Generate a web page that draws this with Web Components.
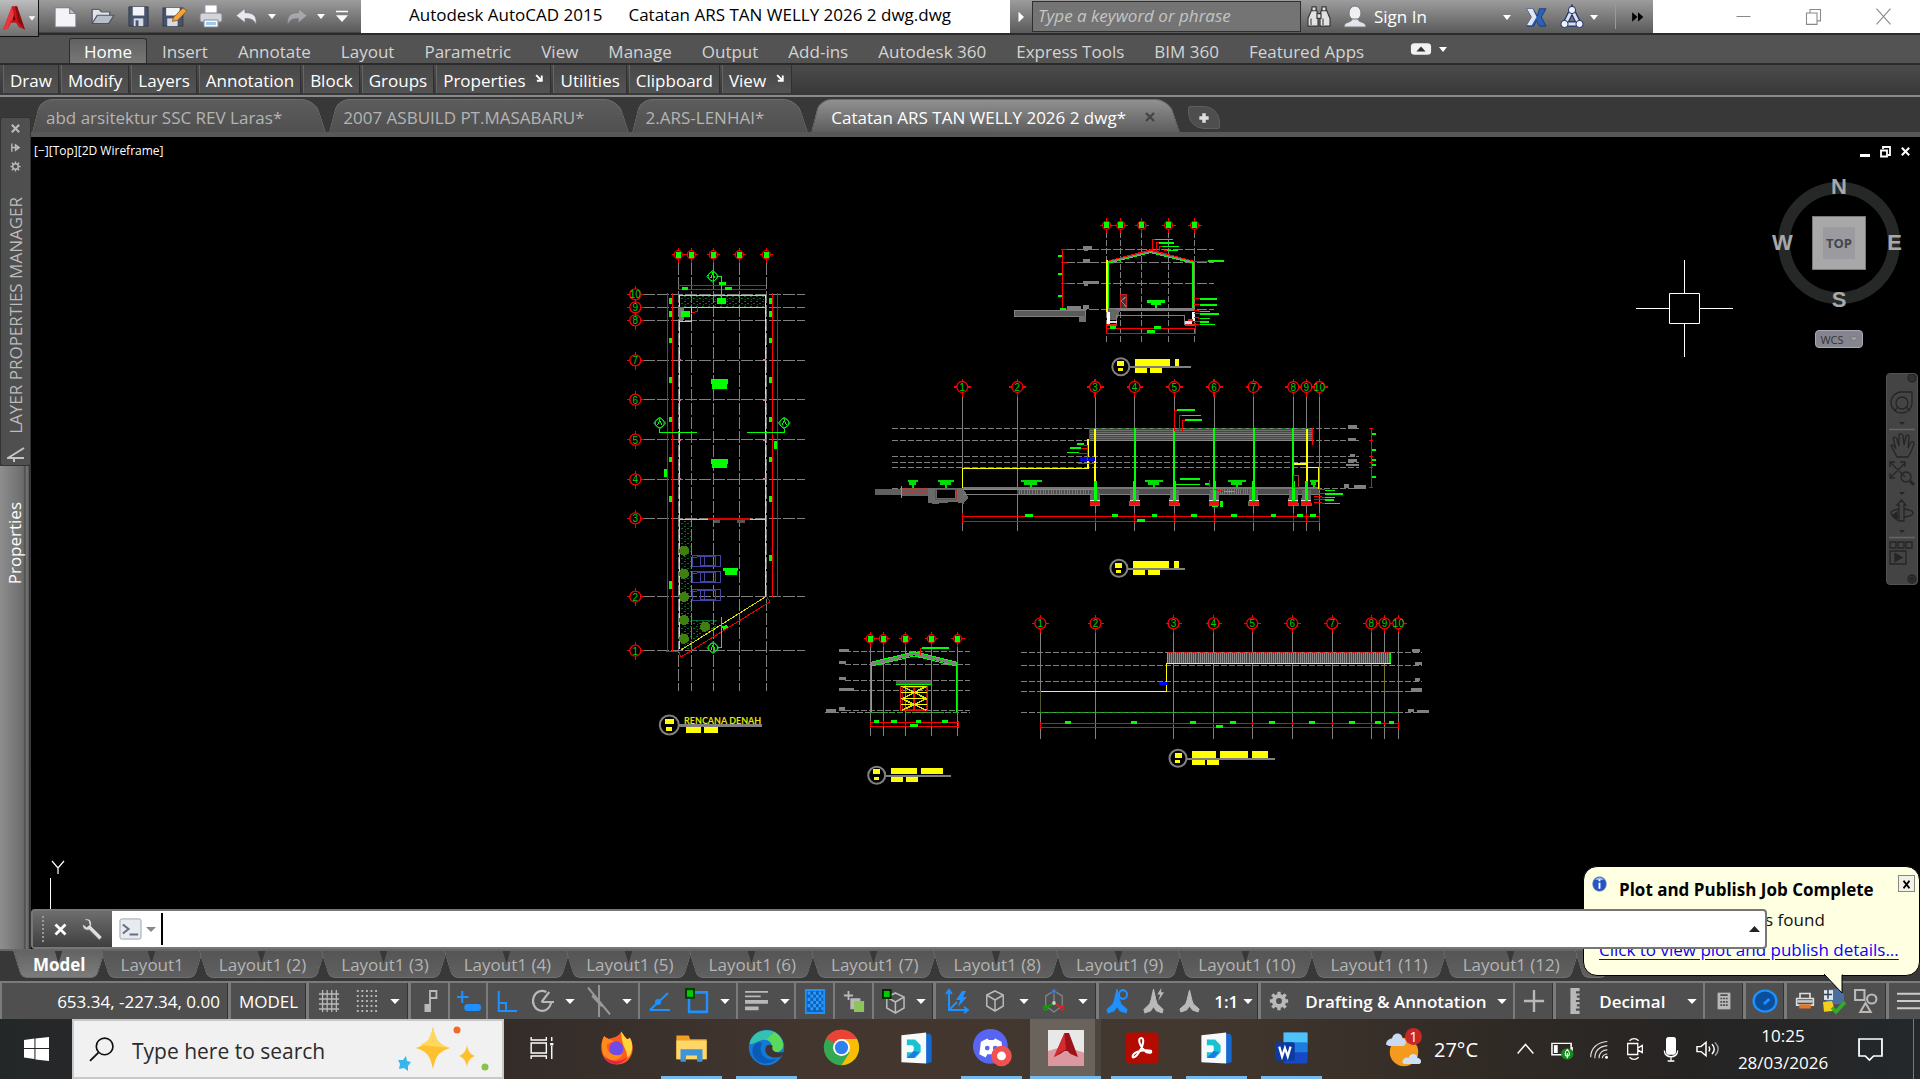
<!DOCTYPE html>
<html lang="en">
<head>
<meta charset="utf-8">
<title>Autodesk AutoCAD 2015</title>
<style>
html,body{margin:0;height:100%;background:#000}
body{font-family:"Open Sans","Noto Sans",sans-serif;font-size:17px;color:#fff;overflow:hidden}
</style>
</head>
<body>
<cad-desktop></cad-desktop>
<script>
const BASE = `*{box-sizing:border-box}
button,input,select{font:inherit;color:inherit;background:none;border:0;padding:0;margin:0;outline:0;border-radius:0}
select{appearance:none}`;

const define = (name, css, html) => customElements.define(name, class extends HTMLElement {
  constructor() {
    super();
    const body = typeof html === 'function' ? html(this) : html;
    this.attachShadow({ mode: 'open' }).innerHTML = `<style>${BASE}${css}</style>${body}`;
  }
});

/* ---------- icons ---------- */
const B = '#1e90ff', G = '#b9b9b9';
const annot = c => `<path d="M12 1l2.500 10 1.500 4 6 5-1 3-6-2-3-4-3 4-6 2-1-3 6-5 1.500-4z" fill="${c}" stroke="${c}"/>`;
const cube = `<path d="M12 2l9 4v11l-9 5-9-5V6zM3 6l9 5 9-5M12 11v11" fill="none" stroke="${G}" stroke-width="1.600"/>`;
const ICONS = {
  logo: `<path d="M1 22L10 2h5l8 20-6-2-3-4h-5l-3 5z" fill="#c4161c"/><path d="M10 2l3 12H9l-3 7-5 1z" fill="#e8383b"/><path d="M13 2l3 13 7 7-8-20z" fill="#8a0c10"/><path d="M10.500 14l1.500-5 1.500 5z" fill="#5a0508"/>`,
  new: `<path d="M2 3h14l6 6v14H2z" fill="#f4f4f8" stroke="#77798a"/><path d="M16 3v6h6z" fill="#c0c4cf" stroke="#77798a"/>`,
  open: `<path d="M2 20V4h7l2 3h8v4" fill="#dfe3ea" stroke="#60646e" stroke-width="1.500"/><path d="M2 21l5-10h16l-5 10z" fill="#b8bec9" stroke="#50545e" stroke-width="1.200"/>`,
  save: `<path d="M2 2h20v20H2z" fill="#49536b" stroke="#333b50"/><path d="M6 2h12v9H6z" fill="#f2f4f8"/><path d="M7 14h10v8H7z" fill="#d7dbe4"/><path d="M9 16h3v6H9z" fill="#49536b"/>`,
  saveas: `<path d="M1 3h19v19H1z" fill="#49536b" stroke="#333b50"/><path d="M4 3h13v8H4z" fill="#f2f4f8"/><path d="M5 14h10v8H5z" fill="#d7dbe4"/><path d="M11 13L20 3l4 3-9 10-5 1z" fill="#f1a33a" stroke="#80520f" stroke-width=".8"/>`,
  print: `<path d="M6 1h12v9H6z" fill="#fff" stroke="#9a9da6"/><rect x="1" y="9" width="22" height="9" rx="2" fill="#d2d5dc" stroke="#7f838c"/><path d="M5 16h14v7H5z" fill="#f6fbff" stroke="#868a94"/><path d="M7 18h10v3H7z" fill="#9bc9f0"/>`,
  undo: `<path d="M10 3v5c8 0 12 3 11 14-2-5-4-7-11-7v5L1 11.500z" fill="#e7e9ef" stroke="#73767e" stroke-width=".8"/>`,
  redo: `<path d="M14 3v5C6 8 2 11 3 22c2-5 4-7 11-7v5l9-8.500z" fill="#a6a7aa" stroke="#77787b" stroke-width=".8"/>`,
  custom: `<path d="M3 5h18v2H3zM3 11h18l-9 9z" fill="#fff"/>`,
  down: `<path d="M4 8h16l-8 10z" fill="#fff"/>`,
  play: `<path d="M7 3l11 9-11 9z" fill="#fff"/>`,
  binoc: `<g fill="#e2e2e2" stroke="#3a3a3a" stroke-width="1.200"><path d="M5 4h4l2 6v12H1V14zM15 4h4l4 10v8H13V10z"/><path d="M5 2h4v4H5zM15 2h4v4h-4zM10 9h4v5h-4z"/></g><path d="M4 14v7M16 14v7" stroke="#888" stroke-width="2"/>`,
  person: `<ellipse cx="12" cy="8" rx="6" ry="7" fill="#eef0f4" stroke="#777"/><path d="M9 14h6c0 4 8 2 8 8H1c0-6 8-4 8-8z" fill="#e1e4ea" stroke="#777"/>`,
  xchg: `<path d="M2 3h6l5 8 2-8h7l-5 9 5 10h-7l-3-6-3 6H2l5-10z" fill="#2b62b8" stroke="#1c3c78"/><path d="M2 3h6l4 9-5 9H2l5-9z" fill="#dfe6f2"/>`,
  a360: `<path d="M12 5L5 19h14z" fill="none" stroke="#22346e" stroke-width="5.500"/><path d="M12 5L5 19h14z" fill="none" stroke="#d9e0f0" stroke-width="3"/><g fill="#eef2fb" stroke="#22346e"><circle cx="12" cy="5" r="3.600"/><circle cx="4.500" cy="19" r="3.600"/><circle cx="19.500" cy="19" r="3.600"/></g>`,
  ff: `<path d="M2 4l9 8-9 8zM12 4l9 8-9 8z" fill="#000"/>`,
  min: `<path d="M4 12h16" stroke="#888" stroke-width="1.200"/>`,
  rest: `<path d="M4 8h12v13H4zM8 8V4h12v13h-4" fill="none" stroke="#888" stroke-width="1.200"/>`,
  close: `<path d="M4 3l16 18M20 3L4 21" stroke="#888" stroke-width="1.200"/>`,
  ribmin: `<rect x="1" y="5" width="22" height="14" rx="4" fill="#f0f1f4"/><path d="M7 15l5-6 5 6z" fill="#333"/>`,
  launch: `<path d="M3 3l12 12M18 4v14H5" fill="none" stroke="#fff" stroke-width="5"/>`,
  x: `<path d="M4 4l16 16M20 4L4 20" stroke="currentColor" stroke-width="4.500"/>`,
  plus: `<path d="M12 4v16M4 12h16" stroke="#ddd" stroke-width="6"/>`,
  pin: `<path d="M4 3v18M4 12h14M12 6l8 6-8 6z" fill="none" stroke="#bbb" stroke-width="3"/>`,
  gear2: `<path d="M12 1v22M1 12h22M4 4l16 16M20 4L4 20" stroke="#bbb" stroke-width="3"/><circle cx="12" cy="12" r="6" fill="#4d4d4d" stroke="#bbb" stroke-width="3"/>`,
  wrench: `<path d="M2 3c4-3 10 0 8 6l12 11-3 3L8 13c-5 1-8-2-7-6l4 3 3-2-1-4z" fill="#dedede" stroke="#555" stroke-width=".8"/>`,
  prompt: `<rect x="1" y="1" width="22" height="22" rx="2" fill="#e8ebf0" stroke="#9aa0aa"/><path d="M4 7l6 5-6 5M11 18h9" fill="none" stroke="#6a7080" stroke-width="2.200"/>`,
  grid: `<path d="M5 1v22M10 1v22M15 1v22M20 1v22M1 5h22M1 10h22M1 15h22M1 20h22" stroke="${G}" stroke-width="1.400"/>`,
  dots: `<path d="M2 2h22M2 7h22M2 12h22M2 17h22M2 22h22" stroke="${G}" stroke-width="2" stroke-dasharray="2 3"/>`,
  snap: `<path d="M12 17V2h7v7h-7" fill="none" stroke="${G}" stroke-width="2"/><path d="M6 15h7v8H6z" fill="${G}"/>`,
  infer: `<path d="M6 2v12M1 8h11" stroke="${B}" stroke-width="2"/><rect x="8" y="15" width="16" height="7" rx="3" fill="${B}"/>`,
  ortho: `<path d="M3 2v20h20M3 14h8v8" fill="none" stroke="${B}" stroke-width="2.200"/>`,
  polar: `<path d="M21 13a9.500 10 0 1 1-5-10M11 13h13M11 13L19 3" fill="none" stroke="${G}" stroke-width="2.200"/>`,
  iso: `<path d="M12 0v24M1 2l22 20M5 8l10 8" stroke="#999" stroke-width="1.800"/>`,
  track: `<path d="M2 21h20M2 21L20 4" fill="none" stroke="${B}" stroke-width="2.200"/><circle cx="10" cy="13" r="3" fill="${B}"/>`,
  osnap: `<path d="M4 4h18v18H4z" fill="none" stroke="${B}" stroke-width="2.400"/><path d="M1 1h8v8H1z" fill="#0c0" stroke="#043d04" stroke-width="2"/>`,
  lwt: `<path d="M1 2h22M1 7h15" stroke="${G}" stroke-width="2"/><path d="M1 13h22M1 20h13" stroke="${G}" stroke-width="4"/>`,
  transp: `<rect x="2" y="1" width="20" height="22" fill="#0f5fb4" stroke="${B}" stroke-width="2"/><path d="M4 4h16M4 10h16M4 16h16" stroke="#2a9bff" stroke-width="3" stroke-dasharray="3 3"/><path d="M7 7h14M7 13h14M7 19h14" stroke="#2a9bff" stroke-width="3" stroke-dasharray="3 3"/>`,
  cycle: `<path d="M6 1v10M1 6h10" stroke="${G}" stroke-width="2"/><path d="M8 9h11v12H8z" fill="${G}"/><path d="M12 12h11v12H12z" fill="#8fc45a"/>`,
  osnap3: `<g transform="translate(2 2)">${cube}</g><path d="M1 1h8v8H1z" fill="#0c0" stroke="#032803" stroke-width="2"/>`,
  cube,
  ducs: `<path d="M4 1v20h19M4 21l8-8M1 5l3-4 3 4M19 18l4 3-4 3" fill="none" stroke="${B}" stroke-width="2"/><path d="M17 2l-6 9h4l-2 7 9-10h-4l3-6z" fill="${B}"/>`,
  gizmo: `<path d="M12 2l9 5v10l-9 6-9-6V7z" fill="none" stroke="#888" stroke-width="1.300"/><path d="M12 3v11" stroke="#888" stroke-width="1.500"/><path d="M12 14l-9 5" stroke="#0a0" stroke-width="2"/><path d="M12 14l9 5" stroke="#d22" stroke-width="2"/><circle cx="12" cy="14" r="2" fill="#ccc"/><circle cx="12" cy="2.500" r="2" fill="none" stroke="#36c" stroke-width="1.500"/><circle cx="3" cy="19" r="2" fill="none" stroke="#0a0" stroke-width="1.500"/><circle cx="21" cy="19" r="2" fill="none" stroke="#d22" stroke-width="1.500"/>`,
  ann1: annot(B) + `<circle cx="18" cy="6" r="4" fill="none" stroke="${B}" stroke-width="2"/>`,
  ann2: annot(G) + `<path d="M20 0l-4 6h3l-2 6 6-8h-3z" fill="${G}"/>`,
  ann3: annot(G),
  gear: `<path d="M12 1v22M1 12h22M4 4l16 16M20 4L4 20" stroke="${G}" stroke-width="4"/><circle cx="12" cy="12" r="6" fill="#4d4d4d" stroke="${G}" stroke-width="5"/>`,
  bigplus: `<path d="M12 1v22M1 12h22" stroke="${G}" stroke-width="2.600"/>`,
  ruler: `<path d="M7 0h10v3h-4v2h4v2h-3v2h3v2h-4v2h4v2h-3v2h3v2h-4v2h4v3H7z" fill="${G}"/>`,
  calc: `<path d="M5 2h14v20H5z" fill="${G}"/><path d="M8 5h8M8 9h2M11 9h2M14 9h2M8 13h2M11 13h2M14 13h2M8 17h2M11 17h2M14 17h2" stroke="#4d4d4d" stroke-width="2"/>`,
  perf: `<circle cx="12" cy="12" r="10.500" fill="#0a4f9c" stroke="${B}" stroke-width="2.200"/><path d="M11 15l5-5" stroke="${B}" stroke-width="2.500"/>`,
  plot: `<path d="M6 9V3h12v6M2 9h20v8H2z" fill="none" stroke="#ddd" stroke-width="2"/><path d="M5 16h14v5H5z" fill="#e37428"/><path d="M3 11h18v3H3z" fill="#ccc"/>`,
  pubs: `<path d="M4 1h14l4 5v9H4z" fill="#4a6f9f"/><path d="M2 2h9v9H2z" fill="#dfe6ee"/><path d="M6 1v9M2 6h8" stroke="#345" stroke-width="1.500"/><path d="M1 13l9-1 3 9-11 1z" fill="#f2cf1d"/><path d="M10 18l4 4 9-9" fill="none" stroke="#2fae26" stroke-width="3.500"/>`,
  shapes: `<path d="M2 1h9v10H2zM12 14l5 9H7z" fill="none" stroke="${G}" stroke-width="2"/><circle cx="18" cy="10" r="4.500" fill="none" stroke="${G}" stroke-width="2"/>`,
  burger: `<path d="M0 4h24M0 12h24M0 20h24" stroke="#ccc" stroke-width="2.200"/>`,
  info: `<circle cx="12" cy="12" r="11" fill="#2356c4" stroke="#88a"/><path d="M5 6a8 8 0 0 1 14 0z" fill="#8fb0f0"/><path d="M12 10v9M12 5v3" stroke="#fff" stroke-width="3"/>`,
  /* taskbar */
  win: `<path d="M0 3l10-1.500V11H0zM11 1.400L24 0v11H11zM0 12h10v10L0 20.500zM11 12h13v12l-13-1.600z" fill="#fff"/>`,
  mag: `<circle cx="15" cy="9" r="8" fill="none" stroke="#111" stroke-width="1.600"/><path d="M9 15l-8 8" stroke="#111" stroke-width="1.800"/>`,
  tview: `<path d="M2 1v3h14V1M2 23v-3h14v3M2 7h14v10H2zM21 1v4M21 10v13" fill="none" stroke="#fff" stroke-width="1.300"/><path d="M19.500 7h3v2.500h-3z" fill="#fff"/>`,
  firefox: `<path d="M15 1c2 3 3 4 4 5 2 0 2-1 2-1 5 8 1 18-9 18S-2 12 3 4c1 1 2 1 3 2 3-1 7-1 9-5z" fill="#ff5a1f"/><path d="M15 1c2 3 3 4 4 5 2 0 2-1 2-1 3 5 2 11-2 14 1-6-4-7-4-18z" fill="#ffd33a"/><circle cx="11.500" cy="12.500" r="5" fill="#6f4be8"/><path d="M3 4c1 2 5 2 7 4-3 0-6 1-5 4 1 4 6 6 11 4-2 5-12 6-14-1C1 11 1 7 3 4z" fill="#ff8a1c"/><path d="M3 17c3 4 12 6 17 0-3 6-13 9-17 0z" fill="#e91f4b"/>`,
  folder: `<path d="M1 2h9l1 3h12v16H1z" fill="#f0a020"/><path d="M1 6h22v15H1z" fill="#ffd768"/><path d="M4 23v-10h16v10h-4v-5H8v5z" fill="#3f93d8"/>`,
  edge: `<circle cx="12" cy="12" r="11.500" fill="#1478d4"/><path d="M1 9C4-2 21-2 23 10c0 5-6 6-8 4 2-5-3-9-8-6-3 1-5 3-6 1z" fill="#35c1b0"/><path d="M17 2c5 3 7 8 5 11-2 3-6 2-7 1 2-4-1-7-3-7z" fill="#5bd95b"/><path d="M9 9c-3 7 3 13 10 10-7 7-17 2-16-6 1-4 4-5 6-4z" fill="#0a5bb5"/><path d="M12 11c-3 5 3 9 9 7l3-3c-7 1-9-1-8-4-1-1-3-1-4 0z" fill="#40342e"/>`,
  chrome: `<circle cx="12" cy="12" r="11.500" fill="#34a853"/><path d="M12 12L2 6A11.500 11.500 0 0 1 22 6.500H12z" fill="#ea4335"/><path d="M12 6.500h10A11.500 11.500 0 0 1 12 23.500l5-8z" fill="#fbbc05"/><circle cx="12" cy="12" r="5.500" fill="#fff"/><circle cx="12" cy="12" r="4.300" fill="#2f80ed"/>`,
  dview: `<path d="M4 3l18-1 1 2v18l-4 1z" fill="#1769d2"/><path d="M1 3l18-2v22L1 22z" fill="#f7f9fb"/><path d="M5 6h6l4 4v5l-4 4H5v-4h4l1-1v-3l-1-1H5z" fill="#19c3cf"/><path d="M9 15l1-1 4 1-4 4H5z" fill="#1a7be6"/>`,
  discord: `<circle cx="11" cy="11" r="11" fill="#5865f2"/><path d="M5 8l4-2 1 1h3l1-1 4 2 1 8-4 2-1-2H9l-1 2-4-2z" fill="#fff"/><circle cx="9" cy="12" r="1.500" fill="#5865f2"/><circle cx="14" cy="12" r="1.500" fill="#5865f2"/><circle cx="18" cy="17" r="6.500" fill="#f0524f"/><circle cx="18" cy="17" r="2.800" fill="#fff"/>`,
  acad: `<path d="M0 0h24v24H0z" fill="#e8e8e8"/><path d="M0 14l10-3 14 4v9H0z" fill="#dc98a0"/><path d="M4 18L11 2h3l6 16-5-2-2-2h-2l-3 2z" fill="#9c1218"/><path d="M11 2l1 11-4 2-4 3z" fill="#d42b2f"/>`,
  acro: `<rect x="1" y="1" width="22" height="22" rx="3" fill="#b30b00"/><path d="M11 5c3-1 2 6-1 10-3 5-5 4-4 2 2-3 8-4 12-3 1 2-3 2-5-1-2-2-4-7-2-8z" fill="none" stroke="#fff" stroke-width="1.400"/>`,
  word: `<rect x="6" y="1" width="17" height="22" rx="2" fill="#1649c4"/><path d="M6 1h17v8H6z" fill="#4fc3f7"/><path d="M6 8h17v7H6z" fill="#1e7be0"/><rect x="0" y="8" width="14" height="13" rx="1.500" fill="#0c3aa0"/><path d="M3 11l2 7 2-6 2 6 2-7" fill="none" stroke="#fff" stroke-width="1.600"/>`,
  weather: `<circle cx="12" cy="14" r="9.500" fill="#f59a1d"/><path d="M0 9c0-3 3-4 4-4 1-5 7-4 7 0 3 0 3 5 0 5H2z" fill="#c9dbf2"/><path d="M11 21c0-3 3-4 4-3 1-4 6-3 6 0 3 0 3 4 1 4H12z" fill="#cfe0f6"/>`,
  chev: `<path d="M3 17L12 7l9 10" fill="none" stroke="#fff" stroke-width="1.600"/>`,
  batt: `<path d="M1 5h20v13H1zM22 9v5" fill="none" stroke="#fff" stroke-width="1.600"/><path d="M3 7h4v9H3z" fill="#fff"/><circle cx="17" cy="17" r="6.500" fill="#128c1a"/><path d="M17 12c3 3 3 7 0 8-3-1-3-5 0-8zM17 16v6" fill="none" stroke="#fff" stroke-width="1.200"/>`,
  wifi: `<path d="M2 22C2 11 10 4 22 3M7 23C7 14 13 9 22 8M12 23c0-6 4-10 10-10M16 23c0-3 3-5 6-5" fill="none" stroke="#ddd" stroke-width="1.400"/><circle cx="21" cy="22" r="1.800" fill="#fff"/>`,
  cam: `<path d="M4 6h11v12H4zM15 11l5-3v8l-5-3M6 3c3-3 7-3 10 0M6 21c3 3 7 3 10 0" fill="none" stroke="#fff" stroke-width="1.400"/>`,
  mic: `<rect x="6" y="0" width="12" height="17" rx="3" fill="#fff"/><path d="M4 13c0 8 16 8 16 0M12 19v4M8 23h8" fill="none" stroke="#fff" stroke-width="1.500"/>`,
  spk: `<path d="M1 9h4l5-5v16l-5-5H1zM13 9c1 2 1 4 0 6M16 6c3 4 3 8 0 12" fill="none" stroke="#fff" stroke-width="1.500"/><path d="M19 4c4 5 4 11 0 16" fill="none" stroke="#999" stroke-width="1.500"/>`,
  note: `<path d="M1 2h22v17h-8l-4 4-4-4H1z" fill="none" stroke="#fff" stroke-width="1.700"/>`,
  spark: `<g fill="#fdc02f"><path d="M35 0c3 13 5 17 17 21-12 4-14 8-17 21-3-13-5-17-17-21 12-4 14-8 17-21z"/><path d="M69 18c1 6 3 9 8 11-5 2-7 5-8 11-1-6-3-9-8-11 5-2 7-5 8-11z"/></g><path d="M35 0c3 13 5 17 17 21l-30-3c8-3 10-6 13-18z" fill="#ffd75a"/><path d="M8 29l1 5 4 1-3 4v5l-4-3-5 1 1-5-2-4 5 0z" fill="#37b6ee"/><circle cx="59" cy="3" r="3.500" fill="#f26a2a"/><circle cx="87" cy="40" r="3.500" fill="#8ac349"/>`,
};
customElements.define('cad-icon', class extends HTMLElement {
  constructor() {
    super();
    this.attachShadow({ mode: 'open' });
  }
  connectedCallback() {
    const w = this.getAttribute('w') || 24, h = this.getAttribute('h') || w;
    const box = this.getAttribute('box') || '0 0 24 24';
    this.shadowRoot.innerHTML = `<style>:host{display:inline-flex;flex:none;vertical-align:middle}svg{display:block;overflow:visible}</style>
      <svg width="${w}" height="${h}" viewBox="${box}" preserveAspectRatio="none" aria-hidden="true">${ICONS[this.getAttribute('name')]}</svg>`;
  }
});
const icon = (n, w, h) => `<cad-icon name="${n}" w="${w}" h="${h || w}"></cad-icon>`;

/* ---------- title bar ---------- */
define('cad-titlebar', `
:host{display:flex;height:35px;background:#fff;border-bottom:2px solid #2b2b2b;color:#000;position:relative;z-index:2}
.logo{flex:none;width:39px;height:37px;background:linear-gradient(#bdbdbd,#6e6e6e);border:solid #111;border-width:0 1px 1px 0;display:flex;align-items:center;gap:1px;padding-left:2px}
.qat{flex:none;display:flex;align-items:center;width:322px;background:linear-gradient(#9c9c9c,#5a5a5a);padding-left:14px;gap:12px;border-bottom:1px solid #444}
.qat button,.info button{display:flex}
.qat .s{margin:0 -5px}
.title{flex:1;display:flex;align-items:center;padding-left:48px;gap:26px;padding-bottom:4px;white-space:nowrap}
.info{flex:none;display:flex;align-items:center;width:643px;background:linear-gradient(#9c9c9c,#5a5a5a);color:#fff}
.play{width:22px;justify-content:center}
input{width:269px;height:31px;background:#747474;border:1px solid #303030;padding:0 5px 2px;font-style:italic}
input::placeholder{color:#c4c4c4;opacity:1}
.r{flex:1;display:flex;align-items:center;padding-left:6px;gap:12px}
.sign{align-items:center;gap:7px;width:170px}
.sign cad-icon:last-child{margin-left:auto}
.sep{width:1px;height:25px;background:#999;margin:0 3px}
.win{flex:none;width:267px;display:flex;align-items:center;padding-left:80px;gap:49px}
.win button{display:flex}
`, `<button class="logo" aria-label="Application menu">${icon('logo', 24, 28)}${icon('down', 10)}</button>
<div class="qat">
<button aria-label="New">${icon('new', 25, 23)}</button><button aria-label="Open">${icon('open', 25, 20)}</button>
<button aria-label="Save">${icon('save', 23, 23)}</button><button aria-label="Save As">${icon('saveas', 25, 23)}</button>
<button aria-label="Plot">${icon('print', 24, 24)}</button><button aria-label="Undo">${icon('undo', 24, 20)}</button>
<button class="s" aria-label="Undo list">${icon('down', 12)}</button><button aria-label="Redo">${icon('redo', 23, 20)}</button>
<button class="s" aria-label="Redo list">${icon('down', 12)}</button><button aria-label="Customize">${icon('custom', 16, 18)}</button>
</div>
<div class="title"><span>Autodesk AutoCAD 2015</span><span>Catatan ARS TAN WELLY 2026 2 dwg.dwg</span></div>
<div class="info"><button class="play" aria-label="Collapse">${icon('play', 12, 14)}</button>
<input aria-label="Keyword" placeholder="Type a keyword or phrase">
<div class="r"><button aria-label="Search">${icon('binoc', 24, 23)}</button>
<button class="sign">${icon('person', 24, 24)}<span>Sign In</span>${icon('down', 12)}</button>
<button aria-label="Exchange">${icon('xchg', 23, 22)}</button><button aria-label="A360">${icon('a360', 24)}</button>
<button style="margin-left:-8px" aria-label="A360 menu">${icon('down', 12)}</button><div class="sep"></div>
<button aria-label="More">${icon('ff', 14)}</button></div></div>
<div class="win"><button aria-label="Minimize">${icon('min', 21)}</button><button aria-label="Restore">${icon('rest', 21)}</button><button aria-label="Close">${icon('close', 21)}</button></div>`);

/* ---------- ribbon ---------- */
const tabs = ['Home', 'Insert', 'Annotate', 'Layout', 'Parametric', 'View', 'Manage', 'Output', 'Add-ins', 'Autodesk 360', 'Express Tools', 'BIM 360', 'Featured Apps'];
define('cad-ribbon-tabs', `
:host{display:flex;height:30px;background:#535353;border-bottom:2px solid #2b2b2b;padding:3px 0 0 69px;align-items:stretch;color:#d4d4d4}
.t{padding:0 14px;border:1px solid transparent;border-bottom:0;white-space:nowrap}
.t.on{background:linear-gradient(#626262,#777);border-color:#2c2c2c;border-radius:3px 3px 0 0;color:#fff}
.m{display:flex;align-items:center;gap:5px;margin-left:31px;padding-bottom:4px}
`, tabs.map((t, i) => `<button class="t${i ? '' : ' on'}">${t}</button>`).join('') +
`<button class="m" aria-label="Minimize ribbon">${icon('ribmin', 22, 20)}${icon('down', 12)}</button>`);

const panels = ['Draw', 'Modify', 'Layers', 'Annotation', 'Block', 'Groups', 'Properties*', 'Utilities', 'Clipboard', 'View*'];
define('cad-ribbon-panels', `
:host{display:flex;height:32px;background:linear-gradient(#4b4b4b,#383838);border-bottom:2px solid #8a8a8a;padding:0 3px 2px;gap:2px}
button{display:flex;align-items:center;padding:2px 6px 0;gap:10px;background:linear-gradient(#484848,#535353);border-right:1px solid #303030;border-left:1px solid #666;white-space:nowrap}
cad-icon{margin-bottom:4px}
`, panels.map(p => `<button>${p.replace('*', '')}${p.endsWith('*') ? icon('launch', 9, 9) : ''}</button>`).join(''));

/* ---------- drawing tabs ---------- */
define('cad-file-tab', `
:host{display:block;position:relative;height:33px;--f:linear-gradient(#5c5c5c,#505050);color:#b4b4b4;padding:0 44px 0 14px;margin-right:3px}
:host([active]){--f:linear-gradient(#909090,#5e5e5e);color:#fff;padding-right:24px;padding-left:20px;margin-right:8px}
:host::before,:host::after{content:"";position:absolute;inset:0 50% 0 0;background:var(--f);transform:skewX(-14deg);transform-origin:bottom;border:solid #6d6d6d;border-width:1px 0 0 1px;border-radius:12px 0 0 0}
:host::after{inset:0 0 0 calc(50% - 1px);transform:skewX(18deg);border-width:1px 1px 0 0;border-radius:0 14px 0 0}
button{position:relative;z-index:1;height:33px;padding-top:3px;display:flex;align-items:center;gap:18px;white-space:nowrap}
.c{color:#444;display:flex}
`, el => `<button><slot></slot>${el.hasAttribute('active') ? `<span class="c">${icon('x', 12)}</span>` : ''}</button>`);
define('cad-file-tabs', `
:host{display:flex;height:40px;background:#383838;border-bottom:5px solid #585858;padding:2px 0 0 1px;align-items:flex-start}
.add{width:32px;height:23px;margin-top:7px;background:#4e4e4e;border:1px solid #5e5e5e;border-radius:2px 16px 2px 16px;display:flex;align-items:center;justify-content:center}
`, `<cad-file-tab>abd arsitektur SSC REV Laras*</cad-file-tab><cad-file-tab>2007 ASBUILD PT.MASABARU*</cad-file-tab><cad-file-tab>2.ARS-LENHAI*</cad-file-tab><cad-file-tab active>Catatan ARS TAN WELLY 2026 2 dwg*</cad-file-tab><button class="add" aria-label="New tab">${icon('plus', 14)}</button>`);

/* ---------- palettes docked at the left ---------- */
define('cad-palettes', `
:host{display:flex;flex-direction:column;width:31px;flex:none;padding-top:20px;background:#383838}
.l{height:349px;flex:none;background:#4f4f4f;border:1px solid #333;border-radius:3px;display:flex;flex-direction:column;align-items:center;padding-top:5px;color:#bbb}
.l button{display:flex;margin-bottom:8px;flex:none}
.v{writing-mode:vertical-rl;transform:rotate(180deg);white-space:nowrap;line-height:24px}
.l .v{margin-top:17px;flex:none}
.l svg{margin:auto 0 3px;flex:none}
.p{flex:1;background:linear-gradient(90deg,#8e8e8e,#6c6c6c 80%,#4a4a4a 86%,#777 92%,#555);border-right:1px solid #333;padding:36px 0 0 3px;margin-right:1px}
`, `<div class="l"><button aria-label="Close">${icon('x', 11)}</button><button aria-label="Auto-hide">${icon('pin', 11)}</button><button aria-label="Properties">${icon('gear2', 11)}</button>
<span class="v">LAYER PROPERTIES MANAGER</span>
<svg width="18" height="15" viewBox="0 0 18 15"><path d="M17 1L1 11h16M7 11v4" fill="none" stroke="#c4c4c4" stroke-width="2"/></svg></div>
<div class="p"><span class="v">Properties</span></div>`);

/* ---------- model drawing ---------- */
const R = '#f00', N = '#0f0', Y = '#ff0', D = '#808080';
function sheet(ox, oy, sx, sy) {
  let out = '';
  const X = x => +(ox + x * sx).toFixed(1), Yy = y => +(oy + y * sy).toFixed(1);
  const s = {
    poly(pts, c, w = 1, dash = '') {
      const p = pts.map((v, i) => i % 2 ? Yy(v) : X(v)).join(' ');
      out += `<polyline points="${p}" fill="none" stroke="${c}" stroke-width="${w}" ${dash && `stroke-dasharray="${dash}"`}/>`;
    },
    fill(pts, c) { out += `<polygon points="${pts.map((v, i) => i % 2 ? Yy(v) : X(v)).join(' ')}" fill="${c}"/>`; },
    box(x1, y1, x2, y2, c, st) {
      out += `<rect x="${X(x1)}" y="${Yy(y1)}" width="${X(x2) - X(x1)}" height="${Yy(y2) - Yy(y1)}" ${st ? `fill="none" stroke="${c}"` : `fill="${c}"`}/>`;
    },
    boxes(list, c) { list.forEach(b => s.box(...b, c)); },
    ring(x, y, r, c, w = 1.5) { out += `<circle cx="${X(x)}" cy="${Yy(y)}" r="${r}" fill="none" stroke="${c}" stroke-width="${w}" shape-rendering="auto"/>`; },
    dot(x, y, r, c) { out += `<circle cx="${X(x)}" cy="${Yy(y)}" r="${r}" fill="${c}"/>`; },
    bubble(x, y, label) {
      const a = X(x), b = Yy(y), r = label ? 5.5 : 4;
      out += `<path d="M${a - r - 2.5} ${b}h3M${a + r} ${b}h3M${a} ${b - r - 3}v3M${a} ${b + r}v4" stroke="${R}" stroke-width="1.300"/><circle cx="${a}" cy="${b}" r="${r}" fill="none" stroke="${R}" stroke-width="1.300" shape-rendering="auto"/>`;
      out += label ? `<text x="${a}" y="${b + 4}" fill="#00d000" font-size="10" text-anchor="middle">${label}</text>` : `<rect x="${a - 2.5}" y="${b - 3}" width="5" height="6" fill="${N}"/>`;
    },
    mark(x, y) {
      const a = X(x), b = Yy(y);
      out += `<path d="M${a - 6} ${b}l6-6 6 6-6 6z" fill="none" stroke="#3b8" shape-rendering="auto"/><circle cx="${a}" cy="${b}" r="4.500" fill="none" stroke="${N}" shape-rendering="auto"/><path d="M${a - 2} ${b + 2}l2-5 2 5" fill="none" stroke="${N}"/>`;
    },
    title(x, y, rx, end, rects) {
      s.ring(x, y, 8.5, D, 2);
      s.poly([x + rx, y + 2, end, y + 2], D, 2);
      s.boxes(rects, Y);
    },
    level(x1, x2, y, gap) { s.poly([x1, y, x2, y], D, 1, gap || '6 2'); },
    raw(t) { out += t; },
    get svg() { return out; }
  };
  return s;
}

function planDrawing() {
  const p = sheet(610, 230, 1 / 3, 1 / 3);
  p.box(207, 195, 467, 230, 'url(#hatch)');
  p.box(207, 868, 244, 1258, 'url(#hatch)');
  p.fill([244, 1170, 320, 1170, 322, 1190, 244, 1238], 'url(#hatch)');
  p.poly([244, 1170, 320, 1170], '#063');
  [205, 244, 310, 388, 469].forEach(x => { p.poly([x, 100, x, 1382], D, 1, '12 2'); p.bubble(x, 74); });
  [193, 232, 271, 391, 509, 629, 748, 865, 1100, 1262].forEach((y, i) => { p.poly([100, y, 585, y], D, 1, '12 2'); p.bubble(76, y, 10 - i); });
  [172, 187].forEach(x => p.poly([x, 190, x, 1265], R));
  [487, 502].forEach(x => p.poly([x, 190, x, 1102], R));
  [166, 179].forEach(y => p.poly([203, y, 468, y], R));
  p.poly([168, 1265, 205, 1265], R);
  p.poly([207, 1258, 207, 195, 467, 195, 467, 1100, 213, 1260], '#dd0', 1);
  p.poly([207, 195, 207, 1258], Y, 1, '3 5'); p.poly([467, 195, 467, 1100], Y, 1, '3 5');
  p.poly([207, 231, 467, 231], '#dd0'); p.poly([207, 867, 467, 867], '#dd0');
  p.poly([295, 868, 420, 868], '#d00', 2); p.poly([207, 273, 244, 273, 244, 231], '#dd0');
  p.poly([205, 1262, 213, 1281, 480, 1115, 470, 1100], '#e00', 1);
  p.boxes([[208, 232, 222, 271]], '#777');
  p.poly([244, 250, 262, 244, 264, 232], R);
  p.boxes([[312, 869, 330, 878], [382, 869, 404, 878]], '#555');
  [962, 1031, 1101, 1170, 1226].forEach(y => p.dot(222, y, 5, '#3f7f0f'));
  p.dot(285, 1190, 5, '#3f7f0f');
  [976, 1024, 1078].forEach(y => {
    p.box(247, y, 332, y + 34, '#4444a0', 1); p.box(272, y + 4, 316, y + 30, '#4444a0', 1);
    p.poly([284, y, 284, y + 34], '#4444a0'); p.poly([247, y + 8, 272, y + 3], '#4444a0');
  });
  const ys = [[205, 221], [243, 260], [324, 338], [441, 458], [561, 575], [682, 695], [798, 815]];
  ys.forEach(([a, b]) => p.boxes([[477, a, 487, b], [177, a, 187, b]], N));
  p.boxes([[303, 447, 354, 463], [307, 463, 351, 476], [303, 687, 354, 703], [306, 703, 351, 713], [339, 1014, 384, 1023], [345, 1023, 380, 1035], [477, 976, 487, 993], [491, 633, 502, 657], [177, 1054, 187, 1078], [162, 717, 171, 740], [216, 171, 233, 180], [345, 171, 366, 180], [327, 156, 347, 165], [320, 205, 347, 221], [213, 243, 240, 260]], N);
  p.fill([336, 1190, 352, 1184, 354, 1193, 340, 1200], N);
  p.poly([322, 139, 335, 139, 335, 205], N); p.poly([148, 597, 148, 607, 261, 607], N);
  p.poly([523, 597, 523, 607, 411, 607], N); p.poly([335, 1160, 335, 1252, 322, 1252], N);
  [[308, 139], [149, 579], [523, 579], [309, 1253]].forEach(m => p.mark(...m));
  p.boxes([391, 510, 629, 747].flatMap(y => [[205, y - 3, 213, y + 3], [459, y - 3, 467, y + 3]]), '#c77ba5');
  p.ring(178, 1485, 9.5, D, 2);
  p.poly([207, 1487, 456, 1487], D, 3);
  p.boxes([[165, 1467, 191, 1482], [168, 1491, 186, 1503], [228, 1491, 273, 1508], [282, 1491, 324, 1508]], Y);
  p.raw(`<text x="684" y="724" fill="#e6e600" font-size="9" font-weight="700" style="font-family:Lato">RENCANA DENAH</text>`);
  return p.svg;
}

function sections() {
  const p = sheet(820, 200, 600 / 1568, 1 / 3);
  /* cross section */
  [748, 785, 840, 910, 978].forEach(x => { p.poly([x, 95, x, 430], D, 1, '6 2'); p.bubble(x + 1, 76); });
  [148, 187, 250, 327].forEach(y => p.level(640, 1030, y, '10 2'));
  p.boxes([[687, 138, 711, 149], [687, 177, 706, 188], [687, 243, 729, 252], [645, 318, 682, 330], [687, 315, 703, 327], [690, 148, 700, 153], [690, 251, 700, 258]], D);
  p.box(508, 330, 695, 348, '#5a5a5a'); p.box(508, 330, 695, 348, D, 1); p.box(677, 348, 694, 366, '#707070');
  p.poly([633, 148, 633, 327], R); [148, 187, 250, 327].forEach(y => p.poly([630, y, 645, y], R));
  p.boxes([[622, 165, 631, 171], [622, 219, 631, 225], [622, 285, 631, 291], [627, 323, 643, 330]], N);
  p.box(748, 324, 980, 332, D);
  p.fill([748, 325, 785, 330, 775, 360, 752, 360], '#666');
  p.poly([774, 375, 774, 346, 952, 346, 952, 375], D);
  p.poly([750, 185, 864, 150, 978, 185], R, 1.5); p.poly([752, 187, 864, 156, 976, 187], D, 2); p.poly([755, 189, 864, 158, 974, 189], N, 1);
  p.poly([750, 180, 750, 335], Y, 2); p.poly([978, 185, 978, 320], '#886', 2);
  p.poly([754, 185, 754, 325], N, 1); p.poly([974, 185, 974, 325], N, 2);
  p.boxes([[750, 336, 758, 372], [972, 336, 980, 362]], '#fff');
  p.boxes([[750, 372, 775, 377], [953, 372, 980, 377], [962, 358, 975, 366]], '#e22');
  p.boxes([[758, 362, 775, 370], [955, 364, 972, 371]], '#ddd');
  p.box(785, 283, 802, 325, '#433'); p.poly([785, 325, 785, 283, 802, 283, 802, 325], '#c22'); p.poly([800, 290, 787, 303, 800, 320], D);
  p.boxes([[855, 300, 902, 308], [864, 308, 890, 314], [875, 314, 881, 324]], N);
  p.poly([748, 385, 982, 385], R, 1); p.poly([748, 400, 982, 400], R, 1); p.poly([749, 372, 749, 403], R); p.poly([981, 372, 981, 403], R);
  p.boxes([[759, 377, 774, 388], [872, 377, 890, 388], [855, 390, 875, 399]], N);
  [[869, 118, 923], [879, 128, 925], [887, 139, 938], [900, 150, 935]].forEach(([x, y, e]) => { p.poly([x, 152, x, y, x + 8, y], R); p.poly([x + 7, y, e, y], N, y == 128 ? 2 : 1); });
  p.poly([978, 184, 1016, 184], R); p.poly([1014, 183, 1056, 183], N, 2);
  [[297, 1037, 2], [315, 1037, 2], [334, 1019, 1], [342, 1043, 2], [355, 1019, 1], [366, 1017, 2], [374, 1032, 1]].forEach(([y, e, w]) => { p.poly([977, y - 3, 994, y], R); p.poly([992, y, e, y], N, w); });
  p.title(786, 500, 22, 970, [[776, 483, 794, 498], [779, 504, 792, 513], [823, 477, 915, 498], [928, 477, 938, 498], [823, 504, 855, 519], [862, 504, 894, 519]]);

  /* long section */
  [685, 721, 769, 787, 802].forEach(y => p.level(188, 1408, y));
  const ax = [372, 516, 719, 822, 926, 1030, 1133, 1237, 1271, 1305];
  ax.forEach((x, i) => { p.poly([x, 585, x, 993], D, 1); p.bubble(x, 561, i + 1); });
  p.level(188, 1395, 864, '6 2');
  p.box(372, 860, 1303, 867, '#777');
  p.box(143, 867, 285, 884, '#606060'); p.box(213, 866, 285, 887, '#a44', 1); p.poly([213, 877, 285, 877], '#944');
  p.fill([283, 864, 374, 864, 388, 893, 374, 912, 355, 905, 300, 912, 283, 908], '#6a6a6a'); p.box(306, 870, 353, 894, '#000'); p.box(303, 867, 356, 897, '#a33', 1);
  p.box(516, 868, 1303, 884, '#4f4f4f'); p.poly([374, 883, 1303, 883], D, 1);
  for (let x = 520; x < 720; x += 7) p.poly([x, 868, x, 882], '#777', 1);
  for (let x = 1040; x < 1130; x += 6) p.poly([x, 868, x, 882], '#777', 1);
  p.poly([374, 868, 718, 868], '#2c2', 1);
  p.box(704, 683, 1287, 722, '#484848');
  [685, 691, 697, 703, 709, 715, 722].forEach((y, i) => p.poly([704, y, 1287, y], i % 3 ? '#6c6c6c' : '#888'));
  p.poly([704, 684, 1287, 684], '#2b7a2b', 1, '5 3');
  p.poly([704, 683, 704, 722], R); p.poly([1287, 683, 1287, 735], R);
  p.poly([372, 864, 372, 805, 701, 805, 701, 717], Y, 1.5);
  p.poly([718, 688, 718, 880], Y, 2); p.poly([1272, 688, 1272, 870], Y, 2); p.poly([1235, 864, 1235, 792, 1272, 792], Y, 1.5);
  p.poly([1272, 802, 1302, 802, 1302, 870], Y, 1);
  ax.slice(2, 9).forEach(x => {
    p.fill([x - 11, 870, x + 11, 870, x + 14, 917, x - 14, 917], '#666');
    p.boxes([[x - 13, 900, x + 13, 908]], '#ddd'); p.boxes([[x - 13, 904, x + 13, 916]], '#e11');
    p.box(x - 4, 842, x + 4, 902, N);
  });
  [823, 926, 1030, 1134, 1237].forEach(x => p.poly([x, 685, x, 902], N, 2));
  p.box(680, 770, 719, 782, '#00c');
  [[672, 732, 690], [653, 743, 682], [645, 757, 678]].forEach(([x, y, e]) => { p.poly([x, y, e, y], N, y < 750 ? 2 : 1); p.poly([e, y + 3, 698, y + 3, 698, 780], R); });
  p.poly([675, 791, 718, 791], R);
  [[242, 13], [329, 21], [552, 27], [872, 23], [1090, 23], [1291, 10]].forEach(([x, w]) => p.boxes([[x - w, 840, x + w, 847], [x - w * .7, 847, x + w * .6, 854], [x - 3, 852, x + 3, 864]], '#0d0'));
  p.poly([213, 858, 213, 895], N);
  [[926, 630, 980], [939, 646, 996], [947, 660, 998]].forEach(([x, y, e]) => { p.poly([x, 694, x, y, x + 8, y], R); p.poly([x + 8, y, e, y], N, y == 646 ? 1 : 2); });
  p.poly([940, 837, 993, 837], N, 2); p.poly([930, 853, 993, 853], N); p.poly([1030, 868, 1057, 875], R); p.poly([1055, 875, 1082, 875], N);
  p.poly([1018, 840, 1018, 865], R); p.boxes([[1006, 849, 1016, 855], [1044, 903, 1053, 920], [1025, 917, 1040, 921]], N);
  p.box(1237, 826, 1250, 862, '#a33', 1);
  [[870, 1346, 1], [882, 1367, 2], [892, 1346, 1], [900, 1343, 2], [910, 1358, 1]].forEach(([y, e, w]) => { p.poly([1290, y - 3, 1320, y], R); p.poly([1320, y, e, y], N, w); });
  p.poly([372, 949, 1306, 949], R, 1.5); p.poly([372, 965, 1306, 965], R, 1);
  ax.filter((_, i) => i != 1).forEach(x => p.poly([x, 940, x, 968], R));
  p.boxes([[536, 942, 556, 951], [828, 957, 849, 966]], N);
  [771, 874, 977, 1082, 1185, 1254, 1288].forEach(x => p.box(x - 7, 942, x + 7, 951, N));
  p.poly([1441, 685, 1441, 865], R, 1.5); [685, 721, 769, 787, 802, 862].forEach(y => p.poly([1434, y, 1446, y], R));
  p.boxes([702, 750, 780, 795, 831].map(y => [1443, y - 3, 1452, y + 3]), N);
  p.boxes([[1380, 675, 1403, 687], [1380, 714, 1400, 723], [1385, 762, 1397, 770], [1380, 777, 1403, 787], [1375, 792, 1408, 798], [1370, 852, 1382, 864], [1396, 855, 1427, 867]], D);
  p.title(781, 1105, 22, 954, [[771, 1089, 789, 1104], [774, 1110, 787, 1119], [818, 1083, 912, 1104], [925, 1083, 938, 1104], [818, 1110, 849, 1125], [857, 1110, 889, 1125]]);
  return p.svg;
}

function elevations() {
  const p = sheet(800, 600, 640 / 1568, 1 / 3);
  [154, 193, 241, 271, 331].forEach(y => p.level(110, 416, y)); p.level(62, 416, 337);
  p.boxes([[96, 147, 120, 156], [96, 183, 113, 193], [96, 231, 113, 241], [96, 264, 132, 273], [96, 322, 110, 334], [64, 328, 88, 338]], D);
  [172, 204, 258, 322, 386].forEach(x => { p.poly([x, 132, x, 408], D); p.bubble(x, 116); });
  p.poly([174, 193, 280, 161, 385, 193], D, 3); p.poly([174, 187, 280, 155, 385, 187], N); p.poly([174, 199, 280, 168, 385, 199], N);
  p.poly([175, 190, 175, 336], N, 1.5); p.poly([384, 190, 384, 336], N, 1.5);
  p.poly([295, 165, 295, 147, 302, 144], R); p.poly([300, 144, 365, 144], N, 2);
  p.box(236, 241, 322, 253, '#555'); p.poly([236, 241, 322, 241], D); p.poly([236, 253, 322, 253], N, 1);
  p.box(247, 259, 312, 331, '#e11', 1); p.box(250, 262, 310, 329, '#a11', 1); p.poly([280, 259, 280, 331], R, 2);
  [259, 278, 296, 314].forEach(y => p.poly([247, y, 312, y], Y, 1.5));
  [[259, 296], [296, 331]].forEach(([a, b]) => { p.poly([250, a, 310, b], '#dd0', 1.5); p.poly([310, a, 250, b], '#dd0', 1.5); });
  p.poly([172, 337, 386, 337], '#2a2', 1, '4 3');
  [367, 380].forEach(y => p.poly([172, y, 388, y], R)); [172, 204, 258, 322, 387].forEach(x => p.poly([x, 362, x, 380], R));
  p.poly([172, 362, 172, 384], R); p.poly([387, 362, 387, 384], R);
  p.boxes([[181, 360, 194, 369], [223, 360, 238, 369], [285, 360, 296, 369], [349, 360, 362, 369], [269, 372, 289, 381]], N);
  p.title(188, 526, 22, 370, [[179, 507, 196, 522], [181, 531, 194, 540], [223, 504, 287, 522], [296, 504, 350, 522], [223, 531, 252, 546], [260, 531, 289, 546]]);

  [157, 196, 244, 274].forEach(y => p.level(541, 1525, y)); p.level(541, 1540, 336); p.poly([541, 336, 1486, 336], D, 1, '6 2');
  const ax = [589, 724, 915, 1013, 1108, 1206, 1304, 1400, 1432, 1466];
  ax.forEach((x, i) => { p.poly([x, 94, x, 417], D); p.bubble(x, 70, i + 1); });
  p.boxes([[1499, 147, 1520, 157], [1507, 186, 1524, 196], [1507, 234, 1520, 244], [1497, 264, 1525, 275], [1490, 327, 1503, 336], [1512, 330, 1540, 339]], D);
  p.box(901, 160, 1447, 188, '#4a4a4a');
  for (let x = 905; x < 1446; x += 5) p.poly([x, 160, x, 188], '#8a8a8a');
  p.poly([901, 158, 1447, 158], '#d22', 1, '5 3'); p.poly([901, 158, 901, 188], N); p.poly([1447, 158, 1447, 188], N);
  p.poly([589, 274, 898, 274, 898, 190, 1447, 190], Y, 1); p.poly([589, 274, 589, 336], '#552'); p.poly([1432, 196, 1432, 274, 1466, 274], '#773');
  p.box(880, 245, 898, 255, '#00f');
  p.poly([589, 338, 1466, 338], '#1a1', 1, '5 3');
  p.poly([589, 370, 1466, 370], R); p.poly([589, 382, 1466, 382], R);
  ax.filter((_, i) => i != 1).forEach(x => p.poly([x, 366, x, 374], R, 1)); p.poly([589, 366, 589, 386], R); p.poly([1466, 366, 1466, 386], R);
  [656, 819, 962, 1060, 1157, 1254, 1352, 1416, 1449].forEach(x => p.box(x - 7, 363, x + 7, 372, N)); p.box(1019, 375, 1036, 384, N);
  p.title(926, 475, 22, 1164, [[919, 459, 936, 474], [919, 480, 931, 489], [960, 453, 1019, 474], [1029, 453, 1098, 474], [1107, 453, 1147, 474], [960, 480, 992, 495], [997, 480, 1027, 495]]);
  return p.svg;
}

define('cad-drawing', `:host{position:absolute;inset:0;overflow:hidden}svg{display:block;width:100%;height:100%}text{font-family:"Liberation Sans",sans-serif}`,
`<svg shape-rendering="crispEdges"><defs><pattern id="hatch" width="6" height="5" patternUnits="userSpaceOnUse"><path d="M0 1h2M3 3h2M1 4h1" stroke="#0a6a2a"/></pattern></defs>
<g transform="translate(-31 -137)">${planDrawing()}${sections()}${elevations()}
<path d="M50.500 878v40" stroke="#fff"/><path d="M52 861l6 7v6M64 861l-6 7" stroke="#fff" fill="none" stroke-width="1.200" shape-rendering="auto"/></g></svg>`);

/* ---------- view cube, navigation bar, window buttons, crosshair ---------- */
define('view-cube', `
:host{position:absolute;right:18px;top:40px;width:126px;display:flex;flex-direction:column;align-items:center;gap:21px}
.c{position:relative;width:122px;height:132px;display:flex;align-items:center;justify-content:center}
.ring{position:absolute;inset:5px 0;border:12px solid #262828;border-radius:50%}
b{position:absolute;color:#a8a8a8;font:700 22px/22px "Liberation Sans",sans-serif}
.n{top:-1px}.s{bottom:-2px}.w{left:-6px}.e{right:-2px}
.top{position:relative;width:52px;height:52px;background:#9b9b9f;border:10px solid #a8a8a8;outline:1px solid #777;color:#44464c;font:700 13px/30px "Open Sans",sans-serif;text-align:center}
.wcs{display:flex;align-items:center;justify-content:center;gap:6px;width:48px;height:18px;background:#85858f;border:1px solid #aaaab4;border-radius:4px;color:#333;font-size:11px}
`, `<div class="c"><div class="ring"></div><b class="n">N</b><b class="s">S</b><b class="w">W</b><b class="e">E</b><button class="top">TOP</button></div>
<button class="wcs">WCS<svg width="8" height="6" viewBox="0 0 8 6"><path d="M0 1h8L4 5z" fill="#a5a5a5" stroke="#666" stroke-width=".5"/></svg></button>`);

define('nav-bar', `
:host{position:absolute;right:2px;top:236px;width:32px;height:212px;background:#444;border:1px solid #525252;border-radius:4px}
svg{display:block}
`, `<svg width="30" height="210" viewBox="1887 374 30 210" fill="none" stroke="#252525" stroke-width="1.300">
<circle cx="1912" cy="378" r="4" fill="#333"/><path d="M1901 392h11v11a10.500 10.500 0 1 1-11-11z"/><circle cx="1902" cy="403" r="6"/><path d="M1894 411l4-4M1910 411l-4-4"/>
<path d="M1889 429.500h26M1889 537.500h26" stroke="#666"/><path d="M1899 422h6l-3 3zM1899 492h6l-3 3zM1899 530h6l-3 3z" fill="#252525" stroke="none"/>
<path d="M1897 457c-2-5-5-8-6-12 2-1 4 2 5 4l-3-11c2-2 4 0 4 2l2 6v-11c2-2 4-1 4 1l1 9 2-9c2-2 4 0 3 2l-1 10 3-6c2-1 3 0 3 2-2 5-3 9-6 13z"/>
<path d="M1891 463l14 14M1891 477l14-14M1890 467v-5h5M1900 462h5v5M1890 473v5h5"/><circle cx="1906" cy="477" r="5"/><path d="M1910 481l4 4" stroke-width="3"/>
<ellipse cx="1902" cy="513" rx="11" ry="4"/><path d="M1899 521v-16h-2l4.500-5 4.500 5h-2v16z" fill="#444"/><path d="M1892 516l5-4v8z" fill="#252525"/>
<path d="M1890 542h6v6h-6zM1898 542h6v6h-6zM1906 542h6v6h-6zM1890 551h16v13h-16z"/><path d="M1895 553.500v8l7-4z" fill="#252525"/><circle cx="1912" cy="579" r="4" fill="#333"/><path d="M1910 578h4M1910 580h4"/></svg>`);

define('cad-viewport', `
:host{display:block;position:relative;flex:1;min-height:0;background:#000;overflow:hidden}
.lbl{position:absolute;left:3px;top:5px;font-size:12px;display:flex;line-height:18px}
.mdi{position:absolute;right:9px;top:9px;display:flex;gap:9px}
.mdi button{display:flex}
.cross{position:absolute;right:186px;top:123px}
`, `<cad-drawing></cad-drawing>
<div class="lbl"><button>[−]</button><button>[Top]</button><button>[2D Wireframe]</button></div>
<div class="mdi"><button aria-label="Minimize"><svg width="11" height="12"><path d="M0 8h10v3H0z" fill="#fff"/></svg></button>
<button aria-label="Restore"><svg width="11" height="12"><path d="M1 4.500h6v6H1zM3 3V1h7v8H8" fill="none" stroke="#fff" stroke-width="1.800"/></svg></button>
<button aria-label="Close">${icon('x', 11)}</button></div>
<svg class="cross" width="98" height="98" fill="none" stroke="#fff"><path d="M48.500 0v33M48.500 63v34M0 48.500h33M64 48.500h33M33.500 33.500h30v30h-30z"/></svg>
<view-cube></view-cube><nav-bar></nav-bar>`);

/* ---------- command line ---------- */
define('cad-command', `
:host{display:flex;position:relative;z-index:5;height:40px;width:calc(100% - 153px);flex:none;border:2px solid #777;border-radius:4px;background:#fff}
.h{display:flex;align-items:center;width:79px;background:linear-gradient(#6e6e6e,#3f3f3f);padding-left:9px;gap:14px}
.h i{height:26px;border-left:2px dotted #999;margin-right:-5px}
.h button{display:flex}
.in{flex:1;display:flex;align-items:center;gap:4px;padding-left:7px}
input{flex:1;min-width:0;color:#000}
.cur{width:2px;align-self:stretch;margin:2px 0 2px 1px;background:#000}
.up{display:flex;align-items:flex-end;padding:0 4px 14px}
`, `<div class="h"><i></i><button aria-label="Close">${icon('x', 15)}</button><button aria-label="Customize">${icon('wrench', 22, 24)}</button></div>
<label class="in">${icon('prompt', 23, 22)}<svg width="10" height="6"><path d="M0 1h10L5 6z" fill="#888"/></svg><span class="cur"></span><input aria-label="Command"></label>
<button class="up" aria-label="History"><svg width="12" height="8"><path d="M0 7h11L5.500 1z" fill="#222"/></svg></button>`);

/* ---------- notification balloon ---------- */
define('cad-balloon', `
:host{position:absolute;right:0;bottom:103px;width:337px;height:110px;background:#ffffe1;border:1px solid #000;border-radius:14px;color:#111;z-index:3;padding:8px 4px 0 8px;line-height:30px;white-space:nowrap}
header{display:flex;align-items:flex-start;gap:12px}
header cad-icon{margin-top:1px}
h2{flex:1;font-size:17px;font-weight:700;margin:0;color:#000}
button{display:flex;align-items:center;justify-content:center;width:17px;height:17px;border:1px solid #888;background:#f2f2e8;color:#000}
p{margin:0 0 0 7px}
a{color:#0a00ff;margin-left:7px;text-underline-offset:3px}
svg{position:absolute;left:240px;top:107px}
`, `<header>${icon('info', 15, 16)}<h2>Plot and Publish Job Complete</h2><button aria-label="Close">${icon('x', 9, 11)}</button></header>
<p>No errors or warnings found</p><a href="#details">Click to view plot and publish details...</a>
<svg width="20" height="22"><path d="M0 0l18 19V0" fill="#ffffe1" stroke="#000"/><path d="M1 0h17v1H1z" fill="#ffffe1"/></svg>`);

/* ---------- layout tabs ---------- */
define('layout-tab', `
:host{display:block;position:relative;height:27px;padding:0 17px 0 18px;color:#b4b4b4;--f:linear-gradient(#555,#606060)}
:host([active]){color:#fff;font-weight:700;--f:linear-gradient(#636363,#7c7c7c)}
:host::before,:host::after{content:"";position:absolute;inset:0 50% 0 2px;background:var(--f);transform:skewX(17deg);border:solid #6f6f6f;border-width:0 0 1px 1px;border-radius:0 0 0 6px}
:host::after{inset:0 2px 0 calc(50% - 1px);transform:skewX(-17deg);border-width:0 1px 1px 0;border-radius:0 0 6px 0}
button{position:relative;z-index:1;height:26px;font-weight:inherit;white-space:nowrap}
`, `<button><slot></slot></button>`);
define('layout-tabs', `
:host{display:flex;height:32px;flex:none;background:#383838;border-top:2px solid #666;padding-left:15px;overflow:hidden}
`, `<layout-tab active>Model</layout-tab><layout-tab>Layout1</layout-tab>` + Array.from({ length: 11 }, (_, i) => `<layout-tab>Layout1 (${i + 2})</layout-tab>`).join('') + `<layout-tab aria-hidden="true"></layout-tab>`);

/* ---------- status bar ---------- */
define('status-cell', `
:host{display:flex;flex:none;align-items:center;gap:13px;background:#4f4f4f;height:36px;padding:0 7px 0 8px;margin-right:2px}
:host([end]){margin-right:4px;box-shadow:1px 0 #333}
:host([tight]){padding:0 5px 0 6px}
:host([wide]){padding:0 8px 0 9px;gap:15px}
`, `<slot></slot>`);
const sb = (n, w = 22, h = 24) => `<button aria-label="${n}">${icon(n, w, h)}</button>`;
const dn = `<button class="dn" aria-label="More">${icon('down', 14, 12)}</button>`;
define('cad-status', `
:host{display:flex;height:38px;flex:none;background:#7b7b7b;padding:2px 0 0 2px;overflow:hidden}
button{display:flex;flex:none}
.dn{margin:0 -3px 0 -4px}
.xyz{width:225px;justify-content:flex-end}
.m{font-weight:500}
select{font-weight:600}
.sel{display:flex;align-items:center;gap:6px}
.ws{margin-left:3px;gap:12px}
.un{gap:23px}
.fill{flex:1;margin-right:0}
`, `<status-cell class="xyz m" end>653.34, -227.34, 0.00</status-cell><status-cell end class="m"><button>MODEL</button></status-cell>
<status-cell end wide>${sb('grid')}${sb('dots')}${dn}</status-cell>
<status-cell>${sb('snap')}</status-cell><status-cell tight>${sb('infer', 25)}</status-cell>
<status-cell>${sb('ortho')}${sb('polar', 23)}${dn}${sb('iso', 24, 32)}${dn}</status-cell>
<status-cell>${sb('track', 24)}${sb('osnap', 24, 26)}${dn}</status-cell><status-cell tight>${sb('lwt', 25, 22)}${dn}</status-cell>
<status-cell>${sb('transp', 22, 25)}</status-cell><status-cell>${sb('cycle', 22, 22)}</status-cell>
<status-cell end>${sb('osnap3', 23)}${dn}</status-cell>
<status-cell wide end>${sb('ducs', 24)}${sb('cube')}${dn}${sb('gizmo')}${dn}</status-cell>
<status-cell end tight>${sb('ann1', 24, 26)}${sb('ann2', 23, 26)}${sb('ann3', 23, 24)}<span class="sel"><select aria-label="Scale"><option>1:1</option></select>${dn}</span></status-cell>
<status-cell>${sb('gear', 20, 20)}<span class="sel ws"><select aria-label="Workspace"><option>Drafting &amp; Annotation</option></select>${dn}</span></status-cell>
<status-cell end>${sb('bigplus')}</status-cell>
<status-cell>${sb('ruler', 22, 26)}<span class="sel un"><select aria-label="Units"><option>Decimal</option></select>${dn}</span></status-cell>
<status-cell end>${sb('calc', 22, 20)}</status-cell><status-cell end tight>${sb('perf', 26)}</status-cell>
<status-cell end style="gap:7px">${sb('plot', 20, 20)}${sb('pubs', 24, 26)}${sb('shapes', 25, 24)}</status-cell><status-cell class="fill">${sb('burger', 24, 22)}</status-cell>`);

/* ---------- Windows taskbar ---------- */
define('task-button', `
:host{display:flex;flex:none;width:75px;height:60px;padding:0 7px}
button{flex:1;display:flex;align-items:center;justify-content:center;border-bottom:3px solid transparent}
:host([run]) button{border-color:#76b9ed}
:host([on]){padding:0 3px 0 1px;}
:host([on]) button{background:#6a635c;box-shadow:inset -6px 0 #4a453f}
`, `<button><slot></slot></button>`);
const tb = (n, w, h, attr = '') => `<task-button ${attr}>${icon(n, w, h)}</task-button>`;
define('win-taskbar', `
:host{display:flex;height:60px;flex:none;background:linear-gradient(90deg,#242728,#332c29 26%,#42362f 42%,#43382f 62%,#332c26 75%,#262423 88%,#24282b)}
.start{width:72px;display:flex;align-items:center;justify-content:center}
.search{display:flex;align-items:center;width:432px;background:#f1f1f1;border:2px solid #c8c8c8;color:#222;padding:0 13px 0 15px;gap:18px}
input{flex:1;min-width:0;font-size:21px;padding-top:3px}
input::placeholder{color:#2b2b2b;opacity:1}
.tray{margin-left:auto;display:flex;align-items:center}
.tray button{display:flex;align-items:center;justify-content:center}
.w{position:relative;font-size:20px;gap:12px;margin-right:37px}
.w i{position:absolute;left:19px;top:-3px;width:17px;height:17px;border-radius:50%;background:#c62828;font:14px/17px "Open Sans",sans-serif;text-align:center}
.ic{display:flex;gap:15px}
.t{flex-direction:column;line-height:27px;width:98px;margin:0 26px 0 14px;font-size:17px}
.end{width:1px;height:60px;background:#777;margin:0 6px 0 30px}
`, `<button class="start" aria-label="Start">${icon('win', 25, 24)}</button>
<label class="search">${icon('mag', 25, 25)}<input aria-label="Search" placeholder="Type here to search"><cad-icon name="spark" w="91" h="44" box="0 0 91 44"></cad-icon></label>
${tb('tview', 26, 24)}${tb('firefox', 34, 36)}${tb('folder', 33, 30, 'run')}${tb('edge', 37, 37, 'run')}${tb('chrome', 37, 37)}${tb('dview', 33, 34)}${tb('discord', 38, 38, 'run')}${tb('acad', 36, 36, 'run on')}${tb('acro', 36, 34, 'run')}${tb('dview', 33, 34, 'run')}${tb('word', 34, 34, 'run')}
<div class="tray"><button class="w">${icon('weather', 36, 36)}<i>1</i><span>27°C</span></button>
<div class="ic"><button aria-label="Hidden icons">${icon('chev', 21, 22)}</button><button aria-label="Battery">${icon('batt', 23, 21)}</button><button aria-label="Network">${icon('wifi', 20, 20)}</button><button aria-label="Camera">${icon('cam', 22, 22)}</button><button aria-label="Microphone">${icon('mic', 20, 25)}</button><button aria-label="Volume">${icon('spk', 24, 20)}</button></div>
<button class="t"><span>10:25</span><span>28/03/2026</span></button><button aria-label="Notifications">${icon('note', 25, 24)}</button><span class="end"></span></div>`);

define('cad-desktop', `
:host{display:flex;flex-direction:column;height:100vh;position:relative;background:#000}
.body{flex:1;min-height:0;display:flex}
.main{flex:1;min-width:0;display:flex;flex-direction:column}
`, `<cad-titlebar></cad-titlebar><cad-ribbon-tabs></cad-ribbon-tabs><cad-ribbon-panels></cad-ribbon-panels>
<div class="body"><cad-palettes></cad-palettes><div class="main"><cad-file-tabs></cad-file-tabs><cad-viewport></cad-viewport><cad-command></cad-command></div></div>
<layout-tabs></layout-tabs><cad-status></cad-status><win-taskbar></win-taskbar><cad-balloon></cad-balloon>`);
</script>
</body>
</html>
